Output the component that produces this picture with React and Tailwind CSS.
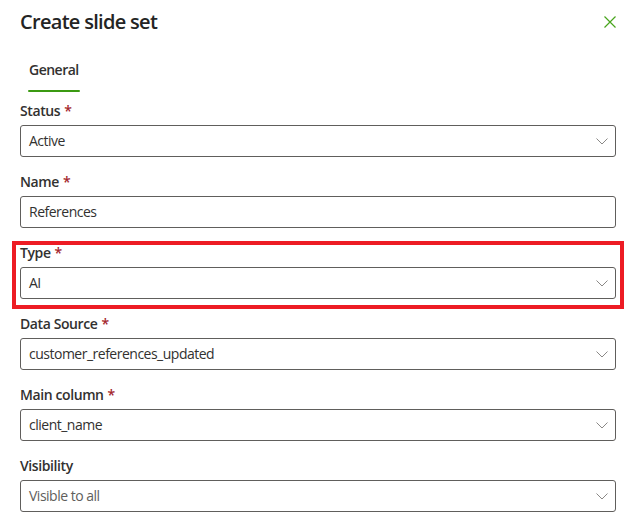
import React from 'react';

const font = { fontFamily: '"Segoe UI", "Open Sans", "Noto Sans", sans-serif' };

const Chevron = () => (
    <svg width="12" height="7" viewBox="0 0 12 7" fill="none" className="shrink-0">
        <path d="M0.5 0.5 L6 6 L11.5 0.5" stroke="#8a8886" strokeWidth="1" />
    </svg>
);

const Field = ({ label, required, value, dropdown = true, placeholder = false }) => (
    <div className="mb-[15px]">
        <div className="text-[14px] leading-[20px] font-semibold text-[#323130] mb-[4px] tracking-[-0.4px]">
            {label}
            {required && <span className="text-[#a4262c] ml-[4px]">*</span>}
        </div>
        <div className="h-[32px] border border-[#605e5c] rounded-[3px] flex items-center pl-[8px] pr-[7px]">
            <span className={`flex-1 text-[14px] leading-[20px] tracking-[-0.5px] ${placeholder ? 'text-[#605e5c]' : 'text-[#323130]'}`}>{value}</span>
            {dropdown && <Chevron />}
        </div>
    </div>
);

export default function App() {
    return (
        <div className="w-[633px] h-[532px] bg-white overflow-hidden pl-[20px] pr-[17px]" style={font}>
            {/* Header */}
            <div className="flex items-center justify-between pt-[8px]">
                <h1 className="text-[20px] leading-[28px] font-semibold text-[#242424] tracking-[-0.7px]">Create slide set</h1>
                <svg width="12" height="12" viewBox="0 0 12 12">
                    <path d="M0.5 0.5 L11.5 11.5 M11.5 0.5 L0.5 11.5" stroke="#48a51c" strokeWidth="1.2" />
                </svg>
            </div>

            {/* Tabs */}
            <div className="mt-[24px] ml-[8px] inline-flex flex-col">
                <span className="text-[14px] leading-[20px] font-semibold text-[#323130] px-[1px] tracking-[-0.5px]">General</span>
                <div className="h-[2px] bg-[#3b9a12] mt-[10px] rounded-full"></div>
            </div>

            {/* Form */}
            <div className="mt-[9px]">
                <Field label="Status" required value="Active" />
                <Field label="Name" required value="References" dropdown={false} />
                <div className="relative">
                    <div className="absolute left-[-8px] right-[-8px] top-[-2px] bottom-[-10px] border-4 border-[#ed1c24] pointer-events-none"></div>
                    <Field label="Type" required value="AI" />
                </div>
                <Field label="Data Source" required value="customer_references_updated" />
                <Field label="Main column" required value="client_name" />
                <Field label="Visibility" value="Visible to all" placeholder />
            </div>
        </div>
    );
}
